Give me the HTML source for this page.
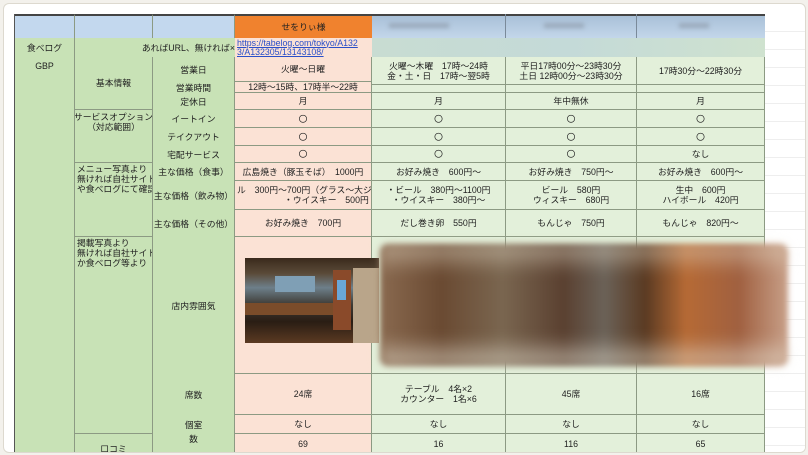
<!DOCTYPE html>
<html><head><meta charset="utf-8"><style>
html,body{margin:0;padding:0;width:808px;height:455px;overflow:hidden;background:#f3f1ec;}
body{font-family:"Liberation Sans","Noto Sans CJK JP",sans-serif;font-size:8.8px;color:#222;}
#card{position:absolute;left:3px;top:3px;width:801px;height:448px;background:#fff;border:1px solid #ddd9cf;border-radius:6px;overflow:hidden;}
.c{position:absolute;box-sizing:border-box;display:flex;align-items:center;justify-content:center;text-align:center;line-height:10px;white-space:nowrap;overflow:hidden;}
.g{background:#c8e2b6;}
.p{background:#fbe2d5;}
.l{background:#e3f0da;}
.b{border-bottom:1px solid #8c9a83;}
.r{border-right:1px solid #8c9a83;}
</style></head><body>
<div id="card">
<div style="position:absolute;left:761px;top:10px;width:40px;height:440px;background:repeating-linear-gradient(#fff 0 17px,#eee 17px 18px);"></div>
<div style="position:absolute;left:10px;top:10px;width:751px;height:440px;border-left:2px solid #555;"></div>
<!-- header -->
<div class="c r" style="left:11px;top:10px;width:60px;height:24px;background:#c3d8ee;border-top:2px solid #444"></div>
<div class="c r" style="left:71px;top:10px;width:78px;height:24px;background:#c3d8ee;border-top:2px solid #444"></div>
<div class="c r" style="left:149px;top:10px;width:82px;height:24px;background:#c3d8ee;border-top:2px solid #444"></div>
<div class="c" style="left:231px;top:10px;width:137px;height:24px;background:#f0822e;border-top:2px solid #444">せをりぃ様</div>
<div class="c" style="left:368px;top:10px;width:393px;height:24px;background:linear-gradient(#a9c0d8,#c3d6ea);border-top:2px solid #444"></div>
<div style="position:absolute;left:385px;top:19px;width:60px;height:5px;background:#9aaabb;filter:blur(2px)"></div>
<div style="position:absolute;left:540px;top:19px;width:40px;height:5px;background:#9aaabb;filter:blur(2px)"></div>
<div style="position:absolute;left:675px;top:19px;width:30px;height:5px;background:#9aaabb;filter:blur(2px)"></div>
<div class="c" style="left:368px;top:34px;width:393px;height:20px;background:linear-gradient(90deg,#c8dcd2,#c4dad8,#cfe2cf);"></div>
<div style="position:absolute;left:501px;top:10px;width:1px;height:24px;background:#7a8a9a"></div>
<div style="position:absolute;left:632px;top:10px;width:1px;height:24px;background:#7a8a9a"></div>
<!-- col A -->
<div class="c g r b" style="left:11px;top:34px;width:60px;height:20px">食べログ</div>
<div class="c g r" style="left:11px;top:53px;width:60px;height:397px;align-items:flex-start;padding-top:4px">GBP</div>
<!-- row URL -->
<div class="c g b" style="left:71px;top:34px;width:160px;height:20px;justify-content:flex-end">あればURL、無ければ×</div>
<div class="c p b" style="left:231px;top:34px;width:137px;height:20px;justify-content:flex-start;padding-left:2px;color:#2a4fc9;text-decoration:underline;text-align:left;white-space:normal;line-height:9px">https://tabelog.com/tokyo/A132<br>3/A132305/13143108/</div>
<!-- col B -->
<div class="c g r b" style="left:71px;top:53px;width:78px;height:53px">基本情報</div>
<div class="c g r b" style="left:71px;top:106px;width:78px;height:53px;align-items:flex-start;padding-top:2px">サービスオプション<br>（対応範囲）</div>
<div class="c g r b" style="left:71px;top:159px;width:78px;height:74px;align-items:flex-start;justify-content:flex-start;text-align:left;padding:1px 2px">メニュー写真より<br>無ければ自社サイト<br>や食べログにて確認</div>
<div class="c g r b" style="left:71px;top:233px;width:78px;height:197px;align-items:flex-start;justify-content:flex-start;text-align:left;padding:1px 2px">掲載写真より<br>無ければ自社サイト<br>か食べログ等より</div>
<div class="c g r" style="left:71px;top:430px;width:78px;height:20px;align-items:flex-end">口コミ</div>
<!-- col C -->
<div class="c g r" style="left:149px;top:53px;width:82px;height:397px"></div>
<div class="c" style="left:149px;top:53px;width:81px;height:25px">営業日</div>
<div class="c" style="left:149px;top:78px;width:81px;height:12px">営業時間</div>
<div class="c" style="left:149px;top:89px;width:81px;height:17px">定休日</div>
<div class="c" style="left:149px;top:106px;width:81px;height:18px">イートイン</div>
<div class="c" style="left:149px;top:124px;width:81px;height:18px">テイクアウト</div>
<div class="c" style="left:149px;top:142px;width:81px;height:17px">宅配サービス</div>
<div class="c" style="left:149px;top:159px;width:81px;height:18px">主な価格（食事）</div>
<div class="c" style="left:149px;top:177px;width:81px;height:29px">主な価格（飲み物）</div>
<div class="c" style="left:149px;top:206px;width:81px;height:27px">主な価格（その他）</div>
<div class="c" style="left:149px;top:233px;width:81px;height:137px">店内雰囲気</div>
<div class="c" style="left:149px;top:370px;width:81px;height:41px">席数</div>
<div class="c" style="left:149px;top:411px;width:81px;height:19px">個室</div>
<div class="c" style="left:149px;top:430px;width:81px;height:20px;align-items:flex-start">数</div>
<!-- D -->
<div class="c p r b" style="left:231px;top:53px;width:137px;height:25px">火曜〜日曜</div>
<div class="c p r b" style="left:231px;top:78px;width:137px;height:11px">12時〜15時、17時半〜22時</div>
<div class="c p r b" style="left:231px;top:89px;width:137px;height:17px">月</div>
<div class="c p r b" style="left:231px;top:106px;width:137px;height:18px">〇</div>
<div class="c p r b" style="left:231px;top:124px;width:137px;height:18px">〇</div>
<div class="c p r b" style="left:231px;top:142px;width:137px;height:17px">〇</div>
<div class="c p r b" style="left:231px;top:159px;width:137px;height:18px">広島焼き（豚玉そば）　1000円</div>
<div class="c p r b" style="left:231px;top:177px;width:137px;height:29px;justify-content:flex-start;padding-left:2px">ル　300円〜700円（グラス〜大ジョ<br>　　　　・ウイスキー　500円</div>
<div class="c p r b" style="left:231px;top:206px;width:137px;height:27px">お好み焼き　700円</div>
<div class="c p r b" style="left:231px;top:233px;width:137px;height:137px"></div>
<div class="c p r b" style="left:231px;top:370px;width:137px;height:41px">24席</div>
<div class="c p r b" style="left:231px;top:411px;width:137px;height:19px">なし</div>
<div class="c p r b" style="left:231px;top:430px;width:137px;height:20px">69</div>
<!-- E -->
<div class="c l r b" style="left:368px;top:53px;width:134px;height:28px">火曜〜木曜　17時〜24時<br>金・土・日　17時〜翌5時</div>
<div class="c l r b" style="left:368px;top:81px;width:134px;height:8px"></div>
<div class="c l r b" style="left:368px;top:89px;width:134px;height:17px">月</div>
<div class="c l r b" style="left:368px;top:106px;width:134px;height:18px">〇</div>
<div class="c l r b" style="left:368px;top:124px;width:134px;height:18px">〇</div>
<div class="c l r b" style="left:368px;top:142px;width:134px;height:17px">〇</div>
<div class="c l r b" style="left:368px;top:159px;width:134px;height:18px">お好み焼き　600円〜</div>
<div class="c l r b" style="left:368px;top:177px;width:134px;height:29px">・ビール　380円〜1100円<br>・ウイスキー　380円〜</div>
<div class="c l r b" style="left:368px;top:206px;width:134px;height:27px">だし巻き卵　550円</div>
<div class="c l r b" style="left:368px;top:233px;width:134px;height:137px"></div>
<div class="c l r b" style="left:368px;top:370px;width:134px;height:41px">テーブル　4名×2<br>カウンター　1名×6</div>
<div class="c l r b" style="left:368px;top:411px;width:134px;height:19px">なし</div>
<div class="c l r b" style="left:368px;top:430px;width:134px;height:20px">16</div>
<!-- F -->
<div class="c l r b" style="left:502px;top:53px;width:131px;height:28px">平日17時00分〜23時30分<br>土日 12時00分〜23時30分</div>
<div class="c l r b" style="left:502px;top:81px;width:131px;height:8px"></div>
<div class="c l r b" style="left:502px;top:89px;width:131px;height:17px">年中無休</div>
<div class="c l r b" style="left:502px;top:106px;width:131px;height:18px">〇</div>
<div class="c l r b" style="left:502px;top:124px;width:131px;height:18px">〇</div>
<div class="c l r b" style="left:502px;top:142px;width:131px;height:17px">〇</div>
<div class="c l r b" style="left:502px;top:159px;width:131px;height:18px">お好み焼き　750円〜</div>
<div class="c l r b" style="left:502px;top:177px;width:131px;height:29px">ビール　580円<br>ウィスキー　680円</div>
<div class="c l r b" style="left:502px;top:206px;width:131px;height:27px">もんじゃ　750円</div>
<div class="c l r b" style="left:502px;top:233px;width:131px;height:137px"></div>
<div class="c l r b" style="left:502px;top:370px;width:131px;height:41px">45席</div>
<div class="c l r b" style="left:502px;top:411px;width:131px;height:19px">なし</div>
<div class="c l r b" style="left:502px;top:430px;width:131px;height:20px">116</div>
<!-- G -->
<div class="c l r b" style="left:633px;top:53px;width:128px;height:28px">17時30分〜22時30分</div>
<div class="c l r b" style="left:633px;top:81px;width:128px;height:8px"></div>
<div class="c l r b" style="left:633px;top:89px;width:128px;height:17px">月</div>
<div class="c l r b" style="left:633px;top:106px;width:128px;height:18px">〇</div>
<div class="c l r b" style="left:633px;top:124px;width:128px;height:18px">〇</div>
<div class="c l r b" style="left:633px;top:142px;width:128px;height:17px">なし</div>
<div class="c l r b" style="left:633px;top:159px;width:128px;height:18px">お好み焼き　600円〜</div>
<div class="c l r b" style="left:633px;top:177px;width:128px;height:29px">生中　600円<br>ハイボール　420円</div>
<div class="c l r b" style="left:633px;top:206px;width:128px;height:27px">もんじゃ　820円〜</div>
<div class="c l r b" style="left:633px;top:233px;width:128px;height:137px"></div>
<div class="c l r b" style="left:633px;top:370px;width:128px;height:41px">16席</div>
<div class="c l r b" style="left:633px;top:411px;width:128px;height:19px">なし</div>
<div class="c l r b" style="left:633px;top:430px;width:128px;height:20px">65</div>
<!-- photo -->
<div style="position:absolute;left:241px;top:254px;width:134px;height:85px;background:
linear-gradient(180deg,#3a2a1c 0%,#5a4a38 18%,#6d7f8a 35%,#3d3a34 55%,#2a1d14 75%,#5b3a22 100%);overflow:hidden">
<div style="position:absolute;left:0;top:45px;width:95px;height:12px;background:#7a4c2a"></div>
<div style="position:absolute;left:88px;top:12px;width:18px;height:60px;background:#8a4a2a"></div>
<div style="position:absolute;left:92px;top:22px;width:9px;height:20px;background:#6aa7d8"></div>
<div style="position:absolute;left:108px;top:10px;width:26px;height:75px;background:#b9a58a"></div>
<div style="position:absolute;left:30px;top:18px;width:40px;height:16px;background:#7f9fb5"></div>
</div>
<!-- blurred photos -->
<div style="position:absolute;left:376px;top:240px;width:408px;height:122px;border-radius:8px;filter:blur(3px);background:
linear-gradient(90deg,#8a6a50 0%,#6a4a32 15%,#7a6650 30%,#5a4030 45%,#6b6258 55%,#5a3a22 65%,#b66a35 75%,#a06040 88%,#c8a089 100%);"></div>
<div style="position:absolute;left:376px;top:240px;width:408px;height:122px;border-radius:8px;filter:blur(6px);background:linear-gradient(180deg,rgba(230,220,200,.5),rgba(0,0,0,0) 25%,rgba(0,0,0,0) 75%,rgba(230,225,210,.6));"></div>
</div>
</body></html>
